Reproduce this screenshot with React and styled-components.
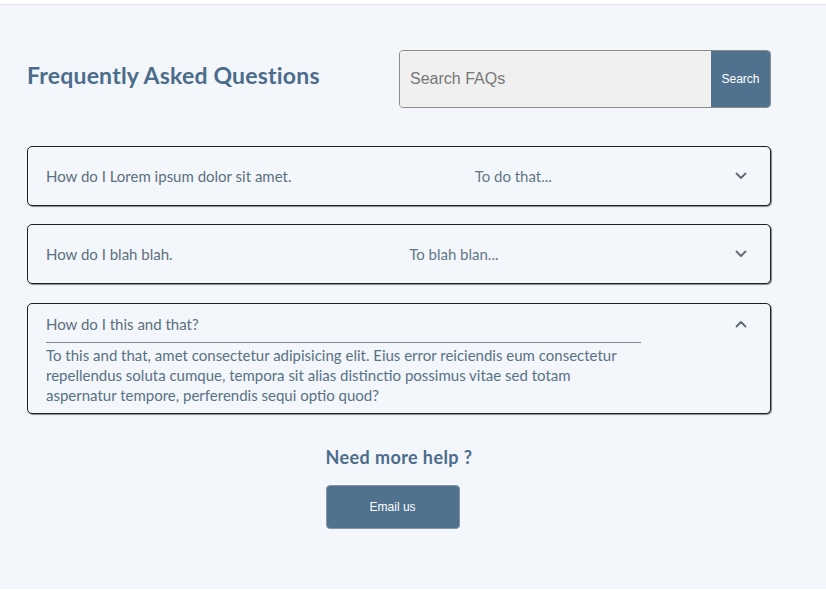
import styled, { createGlobalStyle } from 'styled-components'

const GlobalStyle = createGlobalStyle`
  html, body {
    margin: 0;
    padding: 0;
    background: #fff;
  }
  body {
    font-family: Lato, "Open Sans", sans-serif;
  }
`

const faqs = [
  {
    q: 'How do I Lorem ipsum dolor sit amet.',
    a: 'To do that...',
    open: false,
  },
  {
    q: 'How do I blah blah.',
    a: 'To blah blan...',
    open: false,
  },
  {
    q: 'How do I this and that?',
    a: 'To this and that, amet consectetur adipisicing elit. Eius error reiciendis eum consectetur repellendus soluta cumque, tempora sit alias distinctio possimus vitae sed totam aspernatur tempore, perferendis sequi optio quod?',
    open: true,
  },
]

const Chevron = ({ up }) => (
  <ChevronIcon width="12" height="8" viewBox="0 0 12 8" $up={up}>
    <path d="M1.5 1.5 L6 6 L10.5 1.5" fill="none" stroke="#5e6a72" strokeWidth="1.8" strokeLinecap="round" strokeLinejoin="round" />
  </ChevronIcon>
)

export default function App() {
  return (
    <Page>
      <GlobalStyle />
      <Wrapper>
        <Header>
          <Titulo>Frequently Asked Questions</Titulo>
          <SearchBox>
            <SearchInput placeholder="Search FAQs" />
            <SearchButton>Search</SearchButton>
          </SearchBox>
        </Header>

        <Lista>
          {faqs.map((faq, i) =>
            faq.open ? (
              <Item key={i} $open>
                <OpenHead>
                  <Pregunta>{faq.q}</Pregunta>
                  <Chevron up />
                </OpenHead>
                <Respuesta>{faq.a}</Respuesta>
              </Item>
            ) : (
              <Item key={i}>
                <Pregunta>{faq.q}</Pregunta>
                <Preview>{faq.a}</Preview>
                <Chevron />
              </Item>
            )
          )}
        </Lista>

        <Ayuda>
          <AyudaTitulo>Need more help ?</AyudaTitulo>
          <EmailButton>Email us</EmailButton>
        </Ayuda>
      </Wrapper>
    </Page>
  )
}

const Page = styled.div`
  margin-top: 4px;
  border-top: 1px solid #e2e5e8;
  background: #f3f6fa;
  min-height: 584px;
`

const Wrapper = styled.div`
  width: 744px;
  margin-left: 27px;
  padding-top: 45px;
`

const Header = styled.div`
  display: flex;
  align-items: center;
  justify-content: space-between;
  margin-bottom: 38px;
`

const Titulo = styled.h1`
  margin: 0 0 8px;
  font-size: 23px;
  font-weight: 700;
  letter-spacing: 0.2px;
  color: #4b6c8b;
`

const SearchBox = styled.div`
  display: flex;
  width: 372px;
  height: 58px;
  border: 1px solid #8c8c8c;
  border-radius: 4px;
  overflow: hidden;
  box-sizing: border-box;
`

const SearchInput = styled.input`
  flex: 1;
  border: none;
  outline: none;
  background: #f0f0f0;
  padding: 0 10px;
  font-family: "Liberation Sans", Arial, sans-serif;
  font-size: 16px;
  color: #333;

  &::placeholder {
    color: #777;
  }
`

const SearchButton = styled.button`
  width: 59px;
  border: none;
  background: #50728f;
  color: #fff;
  font-family: "Liberation Sans", Arial, sans-serif;
  font-size: 12px;
  padding: 0;
`

const Lista = styled.div`
  display: flex;
  flex-direction: column;
  gap: 18px;
`

const Item = styled.div`
  display: flex;
  flex-direction: ${p => (p.$open ? 'column' : 'row')};
  align-items: ${p => (p.$open ? 'stretch' : 'center')};
  justify-content: space-between;
  box-sizing: border-box;
  min-height: 60px;
  margin-top: ${p => (p.$open ? '1px' : '0')};
  padding: ${p => (p.$open ? '11px 23px 8px 18px' : '0 23px 0 18px')};
  border: 1px solid #1e1e1e;
  border-radius: 5px;
  box-shadow: 1px 1px 1px rgba(0, 0, 0, 0.45);
  background: #f3f6fa;
`

const OpenHead = styled.div`
  display: flex;
  align-items: center;
  justify-content: space-between;
`

const Pregunta = styled.span`
  font-size: 15px;
  color: #5b7080;
`

const Preview = styled.span`
  font-size: 15px;
  color: #627888;
`

const Respuesta = styled.p`
  width: 595px;
  margin: 9px 0 0;
  padding-top: 2px;
  border-top: 1px solid #7d8892;
  font-size: 15px;
  line-height: 20px;
  color: #587286;
`

const ChevronIcon = styled.svg`
  flex-shrink: 0;
  transform: ${p => (p.$up ? 'rotate(180deg)' : 'none')};
`

const Ayuda = styled.div`
  display: flex;
  flex-direction: column;
  align-items: flex-start;
  width: fit-content;
  margin: 32px auto 0;
  gap: 17px;
`

const AyudaTitulo = styled.h2`
  margin: 0;
  font-size: 18px;
  font-weight: 700;
  letter-spacing: 0.4px;
  color: #4b6c8b;
`

const EmailButton = styled.button`
  width: 134px;
  height: 44px;
  border: 1px solid #8795a2;
  border-radius: 4px;
  background: #50728f;
  color: #fff;
  font-family: "Liberation Sans", Arial, sans-serif;
  font-size: 12px;
`
